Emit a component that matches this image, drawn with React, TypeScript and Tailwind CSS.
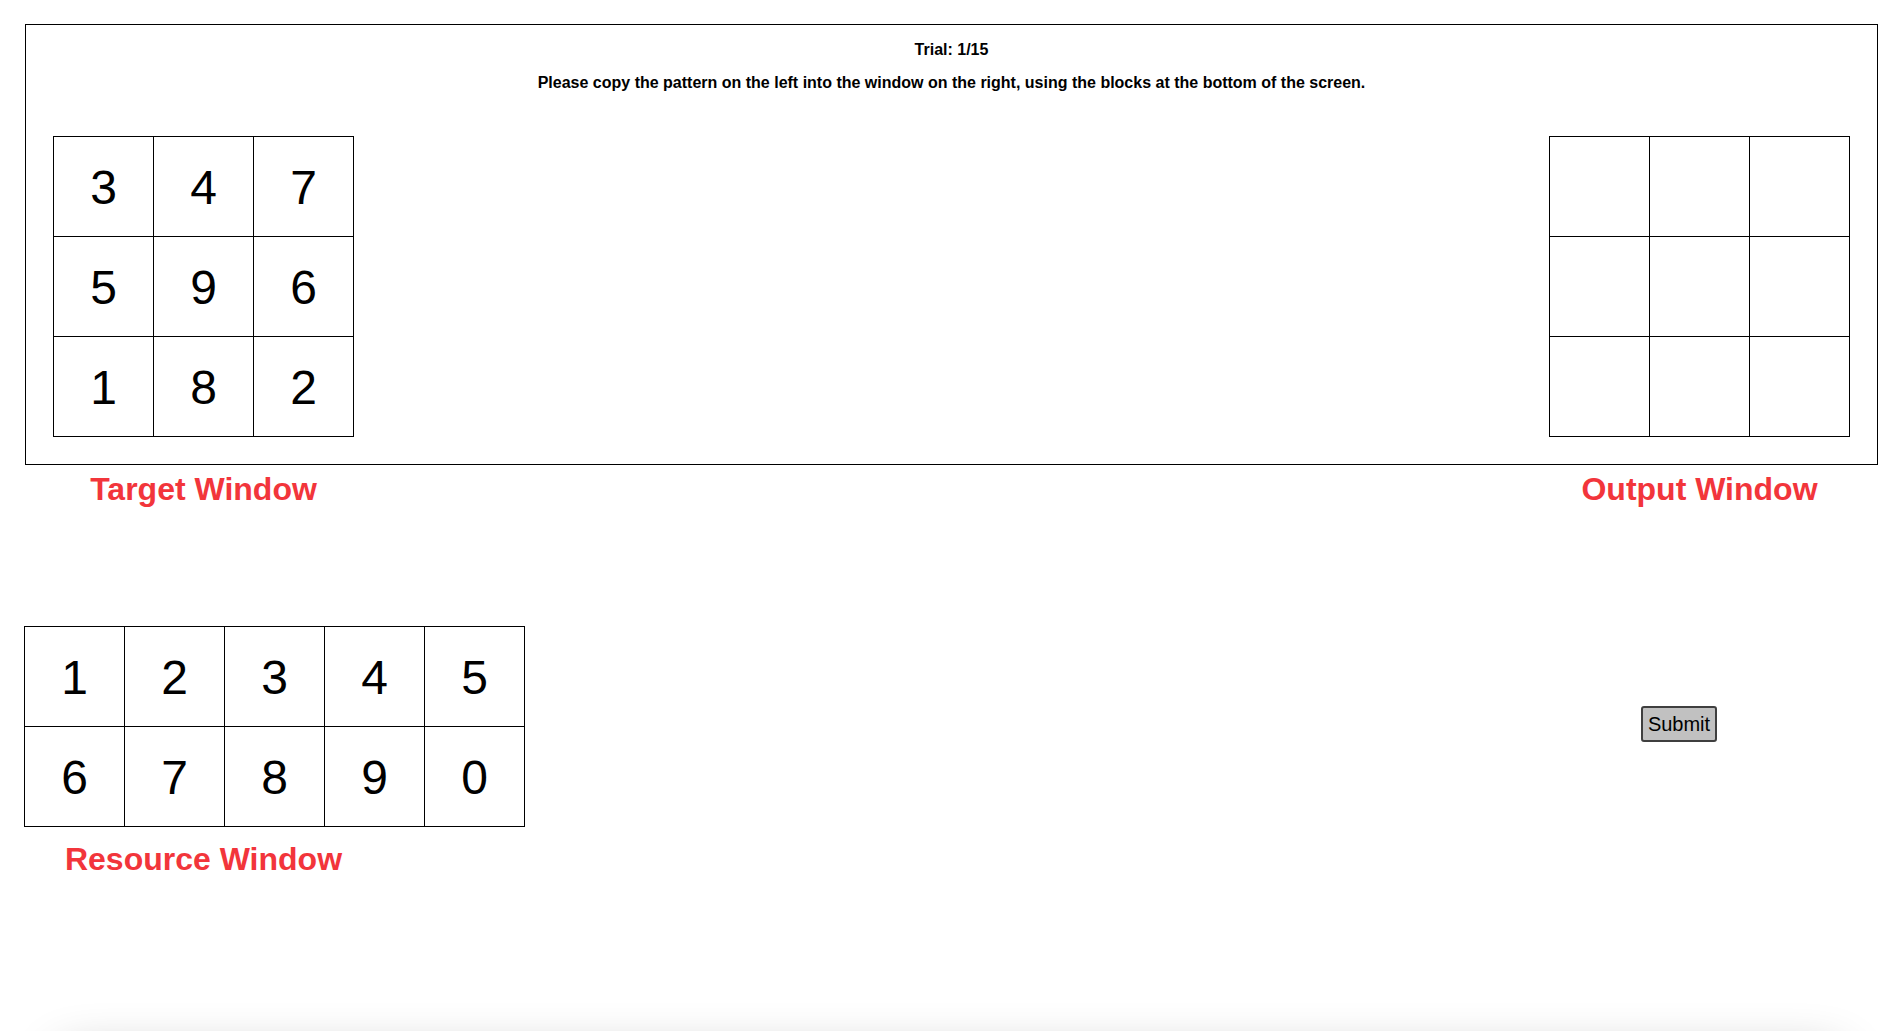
import React from "react"

const target = [3, 4, 7, 5, 9, 6, 1, 8, 2]
const resources = [1, 2, 3, 4, 5, 6, 7, 8, 9, 0]

function Cell({ value }: { value?: number }) {
  return (
    <div className="w-[100px] h-[100px] pt-[2px] border-r border-b border-black flex items-center justify-center text-[48px] leading-none text-black">
      {value}
    </div>
  )
}

export default function App() {
  return (
    <div className="bg-white font-['Liberation_Sans',Arial,sans-serif] text-black">
      <div className="min-h-[1031px]">
        {/* Trial panel */}
        <div className="ml-[25px] mt-[24px] w-[1853px] border border-black px-[27px] pb-[27px]">
          <div className="pt-[16px] text-center text-[16px] font-bold">
            <p className="leading-[18px]">Trial: 1/15</p>
            <p className="mt-[15px] leading-[18px]">
              Please copy the pattern on the left into the window on the right, using the blocks at the bottom of the screen.
            </p>
          </div>

          <div className="mt-[44px] flex justify-between">
            <div className="grid grid-cols-3 w-[301px] border-l border-t border-black">
              {target.map((n, i) => (
                <Cell key={i} value={n} />
              ))}
            </div>
            <div className="grid grid-cols-3 w-[301px] border-l border-t border-black">
              {Array.from({ length: 9 }).map((_, i) => (
                <Cell key={i} />
              ))}
            </div>
          </div>
        </div>

        {/* Labels */}
        <div className="ml-[25px] w-[1853px] px-[28px] mt-[6px] flex justify-between text-[32px] leading-[37px] font-bold text-[#f2353b]">
          <div className="w-[301px] text-center">Target Window</div>
          <div className="w-[301px] text-center">Output Window</div>
        </div>

        {/* Resource window + submit */}
        <div className="mt-[118px] flex items-start">
          <div className="ml-[24px]">
            <div className="grid grid-cols-5 w-[501px] border-l border-t border-black">
              {resources.map((n) => (
                <Cell key={n} value={n} />
              ))}
            </div>
            <div className="ml-[29px] w-[301px] mt-[14px] text-center text-[32px] leading-[37px] font-bold text-[#f2353b]">
              Resource Window
            </div>
          </div>
          <button className="ml-[1116px] mt-[80px] w-[76px] h-[36px] bg-[#c1c1c1] border-2 border-[#3f3f3f] rounded-[3px] text-[20px] leading-none text-black">
            Submit
          </button>
        </div>
      </div>

      <div className="mx-[60px] h-[80px] bg-white rounded-xl shadow-[0_0_50px_rgba(0,0,0,0.3)]" />
    </div>
  )
}
